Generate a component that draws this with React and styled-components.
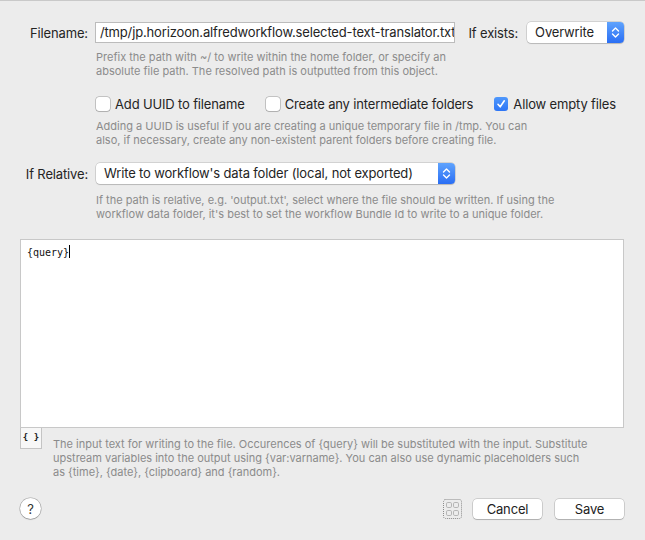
import React from 'react'
import styled, { createGlobalStyle } from 'styled-components'

const Global = createGlobalStyle`
  body {
    margin: 0;
    background: #ececec;
    font-family: Inter, "Liberation Sans", Arial, sans-serif;
  }
`

const Window = styled.div`
  width: 645px;
  height: 540px;
  box-sizing: border-box;
  border-top: 1px solid #c9c9c9;
  padding: 0 21px 0 20px;
  display: flex;
  flex-direction: column;
  background: #ececec;
  color: #242424;
  font-size: 13px;
  letter-spacing: -0.15px;
`

const Row = styled.div`
  display: flex;
  align-items: center;
  height: 21px;
  margin-top: ${p => p.top || 0}px;
`

const Label = styled.div`
  width: 68px;
  margin-right: ${p => p.gap || 7}px;
  text-align: right;
  white-space: nowrap;
`

const InlineLabel = styled.div`
  margin: 0 9px 0 14px;
  white-space: nowrap;
`

const TextField = styled.div`
  width: 360px;
  height: 21px;
  box-sizing: border-box;
  border: 1px solid #bcbcbc;
  background: #fff;
  padding: 0 4px;
  line-height: 19px;
  white-space: nowrap;
  overflow: hidden;
`

const Popup = styled.div`
  width: ${p => p.width}px;
  height: 21px;
  box-sizing: border-box;
  display: flex;
  border-radius: 4px;
  background: #fff;
  box-shadow: 0 0 0 0.5px rgba(0, 0, 0, 0.22), 0 1px 1px rgba(0, 0, 0, 0.12);
  overflow: hidden;
`

const PopupText = styled.div`
  flex: 1;
  padding-left: 8px;
  line-height: 21px;
  white-space: nowrap;
`

const PopupArrows = styled.div`
  width: 17px;
  display: flex;
  align-items: center;
  justify-content: center;
  background: linear-gradient(#5fa3fd, #2a6ef4);
`

const Help = styled.div`
  margin: ${p => p.top || 0}px 0 0 ${p => p.left ?? 76}px;
  font-size: 11px;
  line-height: 14px;
  letter-spacing: 0;
  color: #8b8b8b;
  white-space: nowrap;
`

const CheckRow = styled.div`
  display: flex;
  align-items: center;
  gap: 21px;
  height: 16px;
  margin: 18px 0 0 76px;
`

const CheckItem = styled.label`
  display: flex;
  align-items: center;
  gap: 5px;
  white-space: nowrap;
`

const Box = styled.span`
  width: 14px;
  height: 14px;
  box-sizing: border-box;
  border-radius: 3px;
  display: flex;
  align-items: center;
  justify-content: center;
  background: ${p => (p.checked ? 'linear-gradient(#4f98fc, #2d75f5)' : '#fff')};
  box-shadow: ${p =>
    p.checked
      ? 'none'
      : '0 0 0 0.5px rgba(0,0,0,0.35), 0 1px 1px rgba(0,0,0,0.1)'};
`

const Editor = styled.div`
  margin-top: 18px;
  height: 189px;
  box-sizing: border-box;
  border: 1px solid #c8c8c8;
  background: #fff;
  padding: 5px 6px;
  font-family: "DejaVu Sans Mono", "Liberation Mono", monospace;
  font-size: 10px;
  line-height: 13px;
  letter-spacing: 0;
  color: #111;
`

const Caret = styled.span`
  display: inline-block;
  width: 1px;
  height: 13px;
  background: #000;
  vertical-align: -2px;
`

const EditorFoot = styled.div`
  display: flex;
  align-items: flex-start;
`

const BraceButton = styled.div`
  width: 22px;
  height: 21px;
  box-sizing: border-box;
  border: 1px solid #c4c4c4;
  border-top: none;
  background: #f7f7f7;
  font-family: "DejaVu Sans Mono", monospace;
  font-size: 9px;
  font-weight: bold;
  letter-spacing: 0;
  text-align: center;
  line-height: 18px;
  color: #222;
`

const Footer = styled.div`
  display: flex;
  align-items: center;
  margin-top: 19px;
  height: 21px;
`

const HelpButton = styled.div`
  width: 21px;
  height: 21px;
  border-radius: 50%;
  background: #fff;
  box-shadow: 0 0 0 0.5px rgba(0, 0, 0, 0.3), 0 1px 1px rgba(0, 0, 0, 0.15);
  display: flex;
  align-items: center;
  justify-content: center;
  font-size: 13px;
  color: #333;
`

const Spacer = styled.div`
  flex: 1;
`

const Button = styled.div`
  width: 69px;
  height: 20px;
  margin-left: ${p => p.gap || 0}px;
  border-radius: 4px;
  background: #fff;
  box-shadow: 0 0 0 0.5px rgba(0, 0, 0, 0.25), 0 1px 1px rgba(0, 0, 0, 0.15);
  text-align: center;
  line-height: 20px;
  color: #222;
`

const Arrows = () => (
  <svg width="9" height="13" viewBox="0 0 9 13">
    <path d="M1.5 5 L4.5 2 L7.5 5 M1.5 8 L4.5 11 L7.5 8" fill="none" stroke="#fff" strokeWidth="1.4" strokeLinecap="round" strokeLinejoin="round" />
  </svg>
)

const Check = () => (
  <svg width="10" height="10" viewBox="0 0 10 10">
    <path d="M2 5.3 L4.2 7.8 L8.3 1.8" fill="none" stroke="#fff" strokeWidth="1.6" strokeLinecap="round" strokeLinejoin="round" />
  </svg>
)

const GridIcon = () => (
  <svg width="19" height="20" viewBox="0 0 19 20">
    <rect x="0.5" y="0.5" width="18" height="19" rx="2" fill="none" stroke="#8a8a8a" strokeDasharray="1 1" />
    <rect x="3.5" y="3.5" width="5" height="5" rx="1.3" fill="none" stroke="#b5b5b5" />
    <rect x="10.5" y="3.5" width="5" height="5" rx="1.3" fill="none" stroke="#b5b5b5" />
    <rect x="3.5" y="11.5" width="5" height="5" rx="1.3" fill="none" stroke="#b5b5b5" />
    <rect x="10.5" y="11.5" width="5" height="5" rx="1.3" fill="none" stroke="#b5b5b5" />
  </svg>
)

const Checkbox = ({ checked, children }) => (
  <CheckItem>
    <Box checked={checked}>{checked && <Check />}</Box>
    {children}
  </CheckItem>
)

export default function App() {
  return (
    <>
      <Global />
      <Window>
        <Row top={21}>
          <Label>Filename:</Label>
          <TextField>/tmp/jp.horizoon.alfredworkflow.selected-text-translator.txt</TextField>
          <InlineLabel>If exists:</InlineLabel>
          <Popup width={97}>
            <PopupText>Overwrite</PopupText>
            <PopupArrows><Arrows /></PopupArrows>
          </Popup>
        </Row>
        <Help top={7}>
          Prefix the path with ~/ to write within the home folder, or specify an<br />
          absolute file path. The resolved path is outputted from this object.
        </Help>

        <CheckRow>
          <Checkbox>Add UUID to filename</Checkbox>
          <Checkbox>Create any intermediate folders</Checkbox>
          <Checkbox checked>Allow empty files</Checkbox>
        </CheckRow>
        <Help top={7}>
          Adding a UUID is useful if you are creating a unique temporary file in /tmp. You can<br />
          also, if necessary, create any non-existent parent folders before creating file.
        </Help>

        <Row top={16}>
          <Label gap={8}>If Relative:</Label>
          <Popup width={359}>
            <PopupText>Write to workflow's data folder (local, not exported)</PopupText>
            <PopupArrows><Arrows /></PopupArrows>
          </Popup>
        </Row>
        <Help top={9}>
          If the path is relative, e.g. 'output.txt', select where the file should be written. If using the<br />
          workflow data folder, it's best to set the workflow Bundle Id to write to a unique folder.
        </Help>

        <Editor>
          {'{query}'}<Caret />
        </Editor>
        <EditorFoot>
          <BraceButton>{'{ }'}</BraceButton>
          <Help top={9} left={11}>
            The input text for writing to the file. Occurences of {'{query}'} will be substituted with the input. Substitute<br />
            upstream variables into the output using {'{var:varname}'}. You can also use dynamic placeholders such<br />
            as {'{time}'}, {'{date}'}, {'{clipboard}'} and {'{random}'}.
          </Help>
        </EditorFoot>

        <Footer>
          <HelpButton>?</HelpButton>
          <Spacer />
          <GridIcon />
          <Button gap={11}>Cancel</Button>
          <Button gap={13}>Save</Button>
        </Footer>
      </Window>
    </>
  )
}
